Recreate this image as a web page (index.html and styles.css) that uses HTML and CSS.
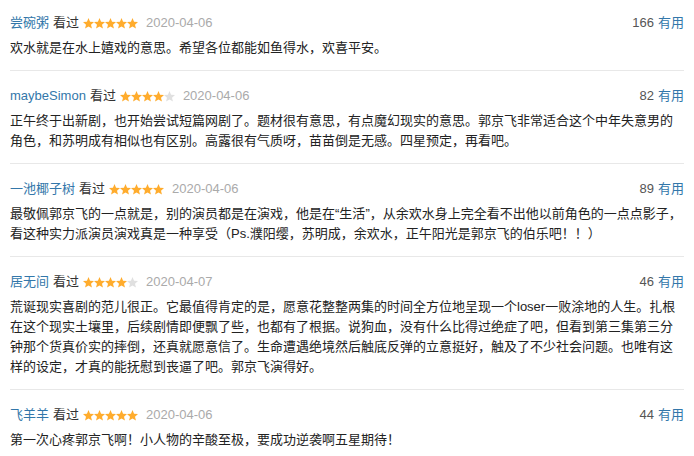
FILE: index.html
```html
<!DOCTYPE html>
<html lang="zh-CN">
<head>
<meta charset="utf-8">
<title>短评</title>
<link rel="stylesheet" href="styles.css">
</head>
<body>
<svg class="defs" width="0" height="0" aria-hidden="true">
  <defs>
    <symbol id="star" viewBox="0 0 11 11">
      <path d="M5.5 0 L7.05 3.75 L11 4.05 L8 6.65 L8.95 10.6 L5.5 8.5 L2.05 10.6 L3 6.65 L0 4.05 L3.95 3.75 Z"/>
    </symbol>
  </defs>
</svg>
<div class="comments">
  <div class="item">
    <div class="head">
      <div class="info">
        <a class="user">尝碗粥</a><span class="watched">看过</span>
        <svg class="stars" width="55" height="11" viewBox="0 0 55 11"><use href="#star" x="0" width="11" height="11" class="on"/><use href="#star" x="11" width="11" height="11" class="on"/><use href="#star" x="22" width="11" height="11" class="on"/><use href="#star" x="33" width="11" height="11" class="on"/><use href="#star" x="44" width="11" height="11" class="on"/></svg>
        <span class="time">2020-04-06</span>
      </div>
      <div class="votes"><span class="count">166</span><a class="useful">有用</a></div>
    </div>
    <p class="short">欢水就是在水上嬉戏的意思。希望各位都能如鱼得水，欢喜平安。</p>
  </div>
  <div class="item">
    <div class="head">
      <div class="info">
        <a class="user">maybeSimon</a><span class="watched">看过</span>
        <svg class="stars" width="55" height="11" viewBox="0 0 55 11"><use href="#star" x="0" width="11" height="11" class="on"/><use href="#star" x="11" width="11" height="11" class="on"/><use href="#star" x="22" width="11" height="11" class="on"/><use href="#star" x="33" width="11" height="11" class="on"/><use href="#star" x="44" width="11" height="11" class="off"/></svg>
        <span class="time">2020-04-06</span>
      </div>
      <div class="votes"><span class="count">82</span><a class="useful">有用</a></div>
    </div>
    <p class="short">正午终于出新剧，也开始尝试短篇网剧了。题材很有意思，有点魔幻现实的意思。郭京飞非常适合这个中年失意男的角色，和苏明成有相似也有区别。高露很有气质呀，苗苗倒是无感。四星预定，再看吧。</p>
  </div>
  <div class="item">
    <div class="head">
      <div class="info">
        <a class="user">一池椰子树</a><span class="watched">看过</span>
        <svg class="stars" width="55" height="11" viewBox="0 0 55 11"><use href="#star" x="0" width="11" height="11" class="on"/><use href="#star" x="11" width="11" height="11" class="on"/><use href="#star" x="22" width="11" height="11" class="on"/><use href="#star" x="33" width="11" height="11" class="on"/><use href="#star" x="44" width="11" height="11" class="on"/></svg>
        <span class="time">2020-04-06</span>
      </div>
      <div class="votes"><span class="count">89</span><a class="useful">有用</a></div>
    </div>
    <p class="short">最敬佩郭京飞的一点就是，别的演员都是在演戏，他是在<span class="q">“</span>生活<span class="q">”</span>，从余欢水身上完全看不出他以前角色的一点点影子，看这种实力派演员演戏真是一种享受（Ps.濮阳缨，苏明成，余欢水，正午阳光是郭京飞的伯乐吧！！）</p>
  </div>
  <div class="item">
    <div class="head">
      <div class="info">
        <a class="user">居无间</a><span class="watched">看过</span>
        <svg class="stars" width="55" height="11" viewBox="0 0 55 11"><use href="#star" x="0" width="11" height="11" class="on"/><use href="#star" x="11" width="11" height="11" class="on"/><use href="#star" x="22" width="11" height="11" class="on"/><use href="#star" x="33" width="11" height="11" class="on"/><use href="#star" x="44" width="11" height="11" class="off"/></svg>
        <span class="time">2020-04-07</span>
      </div>
      <div class="votes"><span class="count">46</span><a class="useful">有用</a></div>
    </div>
    <p class="short">荒诞现实喜剧的范儿很正。它最值得肯定的是，愿意花整整两集的时间全方位地呈现一个loser一败涂地的人生。扎根在这个现实土壤里，后续剧情即便飘了些，也都有了根据。说狗血，没有什么比得过绝症了吧，但看到第三集第三分钟那个货真价实的摔倒，还真就愿意信了。生命遭遇绝境然后触底反弹的立意挺好，触及了不少社会问题。也唯有这样的设定，才真的能抚慰到丧逼了吧。郭京飞演得好。</p>
  </div>
  <div class="item">
    <div class="head">
      <div class="info">
        <a class="user">飞羊羊</a><span class="watched">看过</span>
        <svg class="stars" width="55" height="11" viewBox="0 0 55 11"><use href="#star" x="0" width="11" height="11" class="on"/><use href="#star" x="11" width="11" height="11" class="on"/><use href="#star" x="22" width="11" height="11" class="on"/><use href="#star" x="33" width="11" height="11" class="on"/><use href="#star" x="44" width="11" height="11" class="on"/></svg>
        <span class="time">2020-04-06</span>
      </div>
      <div class="votes"><span class="count">44</span><a class="useful">有用</a></div>
    </div>
    <p class="short">第一次心疼郭京飞啊！小人物的辛酸至极，要成功逆袭啊五星期待！</p>
  </div>
</div>
</body>
</html>
```

FILE: styles.css
```css
html, body {
  margin: 0;
  padding: 0;
  background: #fff;
}

body {
  font-family: "Liberation Sans", Arial, "Noto Sans CJK SC", sans-serif;
  font-size: 13px;
  color: #111;
  text-spacing-trim: space-all;
}

.defs {
  position: absolute;
  width: 0;
  height: 0;
  overflow: hidden;
}

.comments {
  padding: 0 10px;
}

.item {
  padding: 15px 0 12px;
  border-bottom: 1px solid #e8e8e8;
}

.item:first-child {
  padding-top: 13px;
}

.item:last-child {
  border-bottom: none;
}

.head {
  display: flex;
  justify-content: space-between;
  align-items: center;
  height: 20px;
  line-height: 20px;
}

.info {
  display: flex;
  align-items: center;
}

.user {
  color: #37a;
  text-decoration: none;
}

.watched {
  color: #333;
  margin-left: 4px;
}

.stars {
  display: block;
  margin-left: 4px;
  margin-right: 8px;
}

.stars .on {
  fill: #ffac2d;
}

.stars .off {
  fill: #e0e0e0;
}

.time {
  color: #aaa;
}

.votes {
  display: flex;
  align-items: center;
}

.count {
  color: #555;
}

.useful {
  color: #37a;
  text-decoration: none;
  margin-left: 4px;
}

.short {
  margin: 5px 0 0;
  line-height: 20px;
  color: #222;
}

.q {
  font-family: "Liberation Sans", Arial, sans-serif;
}
```
